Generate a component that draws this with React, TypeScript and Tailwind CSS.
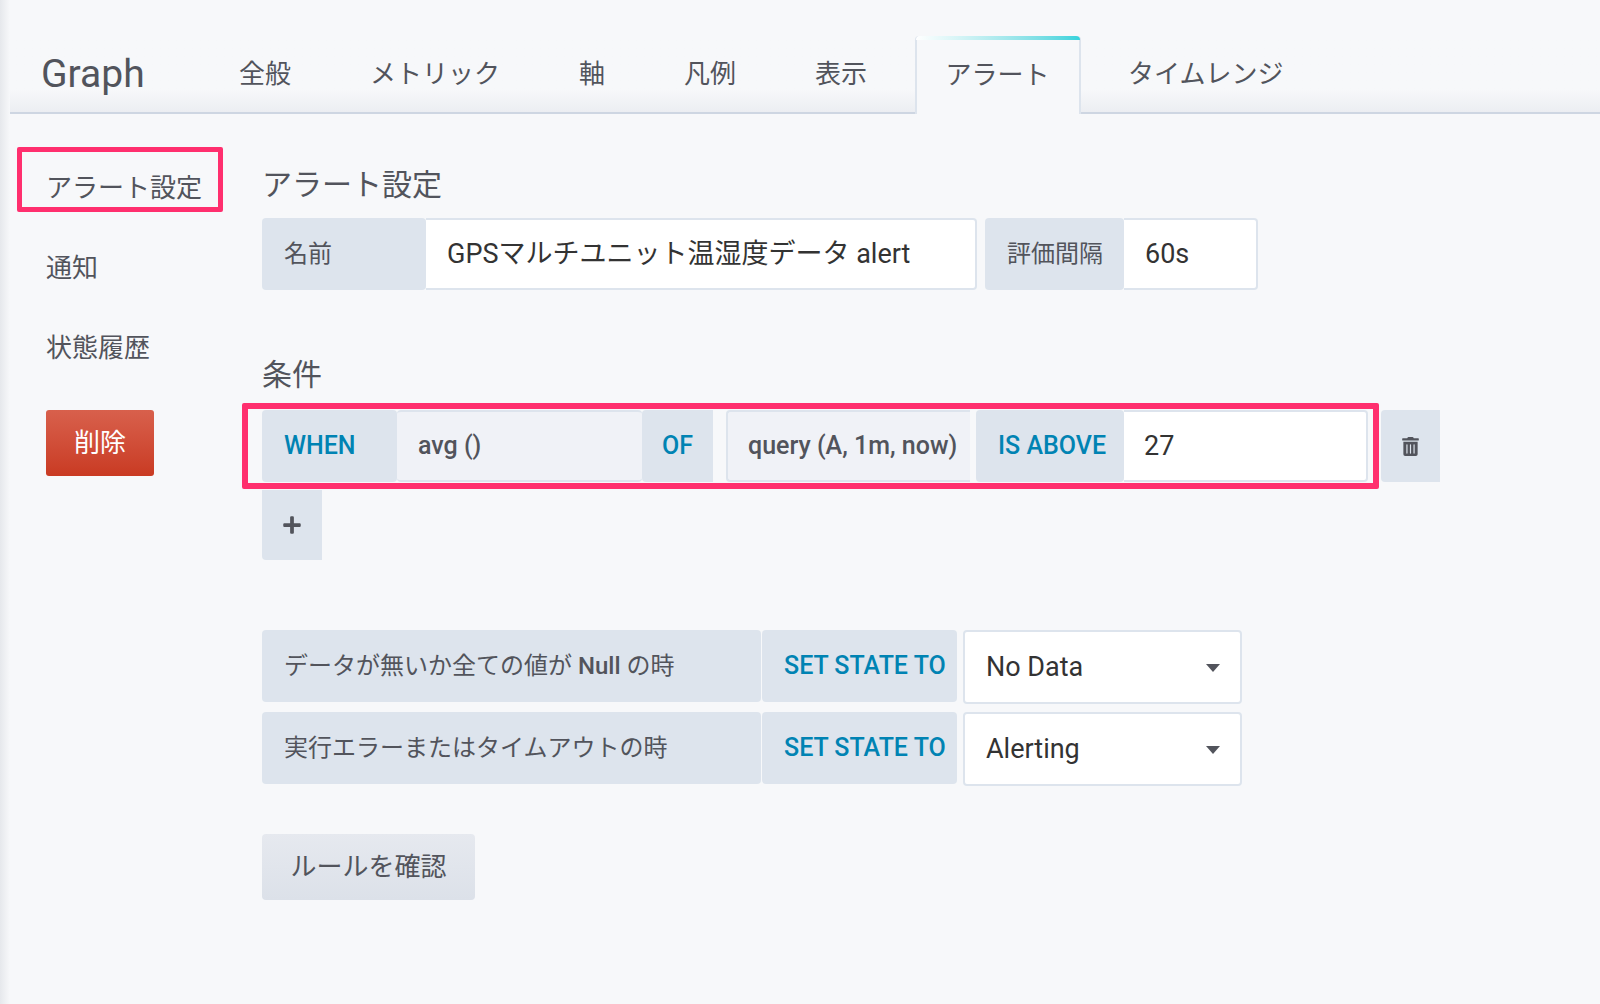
import { FaPlus, FaTrashAlt } from "react-icons/fa";

const tabs = ["全般", "メトリック", "軸", "凡例", "表示", "アラート", "タイムレンジ"];

function Label({ w, children, kw, mr }: { w: string; children: React.ReactNode; kw?: boolean; mr?: string }) {
  return (
    <div
      className={`${w} ${mr ?? ""} flex h-[72px] shrink-0 items-center rounded-[4px] bg-[#dde4ed] pl-[22px] ${
        kw ? "text-[25px] font-medium text-[#0083b3]" : "text-[24px] text-[#52545c]"
      }`}
    >
      {children}
    </div>
  );
}

function Caret() {
  return (
    <svg width="14" height="8" viewBox="0 0 14 8" className="absolute right-[20px] top-[32px]">
      <path d="M0 0h14L7 8z" fill="#52545c" />
    </svg>
  );
}

function SelectBox({ value }: { value: string }) {
  return (
    <div className="relative ml-[6px] flex h-[74px] w-[279px] items-center rounded-[4px] border-2 border-[#dde4ed] bg-white pl-[21px] text-[27px] text-[#333333]">
      {value}
      <Caret />
    </div>
  );
}

export default function App() {
  return (
    <div
      className="relative h-[1004px] w-[1600px] overflow-hidden bg-[#f7f8fa] text-[#52545c]"
      style={{ fontFamily: 'Roboto, "Noto Sans CJK JP", sans-serif' }}
    >
      <div className="pointer-events-none absolute inset-y-0 left-0 w-[10px] bg-gradient-to-r from-[#e6e8ec] to-[#f7f8fa]" />

      <header className="mt-[36px] flex h-[78px] items-end border-b-2 border-[#ced6e2] bg-gradient-to-b from-[#f7f8fa] from-70% to-[#eceef2] pl-[41px]">
        <div className="mb-[15px] w-[198px] text-[39px] leading-[46px] text-[#52545c]">Graph</div>
        <div className="flex">
          {tabs.map((t) => {
            const active = t === "アラート";
            return active ? (
              <div
                key={t}
                className="relative z-10 mx-[8px] -mb-[2px] flex h-[78px] items-center rounded-t-[4px] border-x-2 border-[#dde4ed] bg-[#f7f8fa] px-[29px] text-[26px]"
              >
                <div className="absolute -inset-x-[1px] top-0 h-[4px] rounded-t-[4px] bg-gradient-to-r from-[#ffffff] to-[#33d3dc]" />
                {t}
              </div>
            ) : (
              <div key={t} className="flex h-[76px] items-center px-[39.5px] text-[26px] first:pl-0">
                {t}
              </div>
            );
          })}
        </div>
      </header>

      <main className="flex">
        <nav className="relative w-[262px] shrink-0 pl-[46px] pt-[54px] text-[26px]">
          <div className="relative flex h-[40px] items-center">
            アラート設定
            <div className="absolute -left-[29px] -top-[21px] h-[65px] w-[206px] rounded-[2px] border-[5px] border-[#ff2f6e]" />
          </div>
          <div className="mt-[40px] flex h-[40px] items-center">通知</div>
          <div className="mt-[40px] flex h-[40px] items-center">状態履歴</div>
          <div className="mt-[42px] flex h-[66px] w-[108px] items-center justify-center rounded-[3px] bg-gradient-to-b from-[#d8604c] to-[#c93a22] text-[26px] text-white">
            削除
          </div>
        </nav>

        <section className="flex-1">
          <h2 className="mt-[49px] h-[55px] text-[30px] leading-[44px] text-[#52545c]">アラート設定</h2>

          <div className="flex">
            <Label w="w-[164px]">名前</Label>
            <div className="flex h-[72px] w-[551px] items-center rounded-r-[4px] border-2 border-l-0 border-[#dde4ed] bg-white pl-[21px] text-[27px] text-[#333333]">
              GPSマルチユニット温湿度データ alert
            </div>
            <div className="ml-[8px]">
              <Label w="w-[139px]">評価間隔</Label>
            </div>
            <div className="flex h-[72px] w-[134px] items-center rounded-r-[4px] border-2 border-l-0 border-[#dde4ed] bg-white pl-[21px] text-[27px] text-[#333333]">
              60s
            </div>
          </div>

          <h2 className="mt-[62px] h-[58px] text-[30px] leading-[46px] text-[#52545c]">条件</h2>

          <div className="relative flex">
            <Label w="w-[135px]" kw>WHEN</Label>
            <div className="flex h-[72px] w-[245px] items-center rounded-[4px] border-2 border-[#dde4ed] border-x-0 border-b-[2px] bg-[#f0f2f7] pl-[21px] text-[25px] font-medium">
              avg ()
            </div>
            <div className="flex h-[72px] w-[71px] items-center justify-center rounded-l-[4px] bg-[#dde4ed] text-[25px] font-medium text-[#0083b3]">
              OF
            </div>
            <div className="ml-[13px] flex h-[72px] w-[244px] items-center rounded-l-[4px] border-2 border-r-0 border-[#dde4ed] bg-[#f0f2f7] pl-[20px] text-[25px] font-medium">
              query (A, 1m, now)
            </div>
            <div className="ml-[6px]">
              <Label w="w-[148px]" kw>IS ABOVE</Label>
            </div>
            <div className="flex h-[72px] w-[244px] items-center rounded-r-[4px] border-2 border-l-0 border-[#dde4ed] bg-white pl-[20px] text-[27px] text-[#333333]">
              27
            </div>
            <div className="ml-[13px] flex h-[72px] w-[59px] items-center justify-center rounded-l-[4px] bg-[#dde4ed] text-[19px]">
              <FaTrashAlt />
            </div>
            <div className="absolute -left-[20px] -top-[7px] h-[86px] w-[1137px] rounded-[2px] border-x-[6px] border-y-[6px] border-[#ff2f6e]" />
          </div>

          <div className="mt-[8px] flex h-[70px] w-[60px] items-center justify-center rounded-bl-[4px] bg-[#dde4ed] text-[20px]">
            <FaPlus />
          </div>

          <div className="mt-[70px] flex">
            <Label w="w-[499px]">
              <span>データが無いか全ての値が <b className="font-medium">Null</b> の時</span>
            </Label>
            <Label w="w-[195px] ml-[1px]" kw>SET STATE TO</Label>
            <SelectBox value="No Data" />
          </div>
          <div className="mt-[8px] flex">
            <Label w="w-[499px]">実行エラーまたはタイムアウトの時</Label>
            <Label w="w-[195px] ml-[1px]" kw>SET STATE TO</Label>
            <SelectBox value="Alerting" />
          </div>

          <div className="mt-[48px] flex h-[66px] w-[213px] items-center justify-center rounded-[4px] bg-gradient-to-b from-[#e6e9ef] to-[#dce1e9] text-[26px]">
            ルールを確認
          </div>
        </section>
      </main>
    </div>
  );
}
